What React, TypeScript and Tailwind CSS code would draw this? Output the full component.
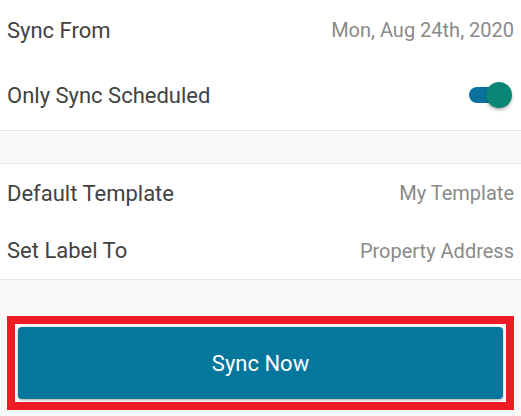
export default function App() {
  return (
    <div className="min-h-[416px] w-[521px] bg-[#f9f9f9] font-['Roboto',sans-serif]">
      {/* Sync settings */}
      <div className="border-b border-[#e6e6e6] bg-white">
        <div className="flex h-[60px] items-center justify-between pl-[7px] pr-[7px]">
          <span className="text-[22px] text-[#424242]">Sync From</span>
          <span className="text-[20px] text-[#8a8a8a]">Mon, Aug 24th, 2020</span>
        </div>
        <div className="flex h-[70px] items-center justify-between pl-[7px] pr-[9px]">
          <span className="text-[22px] text-[#424242]">Only Sync Scheduled</span>
          <div className="relative h-[26px] w-[44px]">
            <div className="absolute left-[1px] top-[5px] h-[16px] w-[36px] rounded-full bg-[#0b72a0]" />
            <div className="absolute right-0 top-0 h-[26px] w-[26px] rounded-full bg-[#0a8676] shadow-[0_2px_3px_rgba(0,0,0,0.3)]" />
          </div>
        </div>
      </div>

      <div className="h-[32px]" />

      {/* Template settings */}
      <div className="border-y border-[#e6e6e6] bg-white">
        <div className="flex h-[58px] items-center justify-between pl-[7px] pr-[7px]">
          <span className="text-[22px] text-[#424242]">Default Template</span>
          <span className="text-[20px] text-[#8a8a8a]">My Template</span>
        </div>
        <div className="flex h-[57px] items-center justify-between pl-[7px] pr-[7px]">
          <span className="text-[22px] text-[#424242]">Set Label To</span>
          <span className="text-[20px] text-[#8a8a8a]">Property Address</span>
        </div>
      </div>

      <div className="px-[7px] pt-[36px] pb-[6px]">
        <div className="border-[8px] border-[#ed1c24] bg-white p-[3px]">
          <button className="flex h-[72px] w-full items-center justify-center rounded-[4px] bg-[#06779c] text-[22px] text-white shadow-[0_1px_3px_rgba(0,0,0,0.35)]">
            Sync Now
          </button>
        </div>
      </div>
    </div>
  );
}
